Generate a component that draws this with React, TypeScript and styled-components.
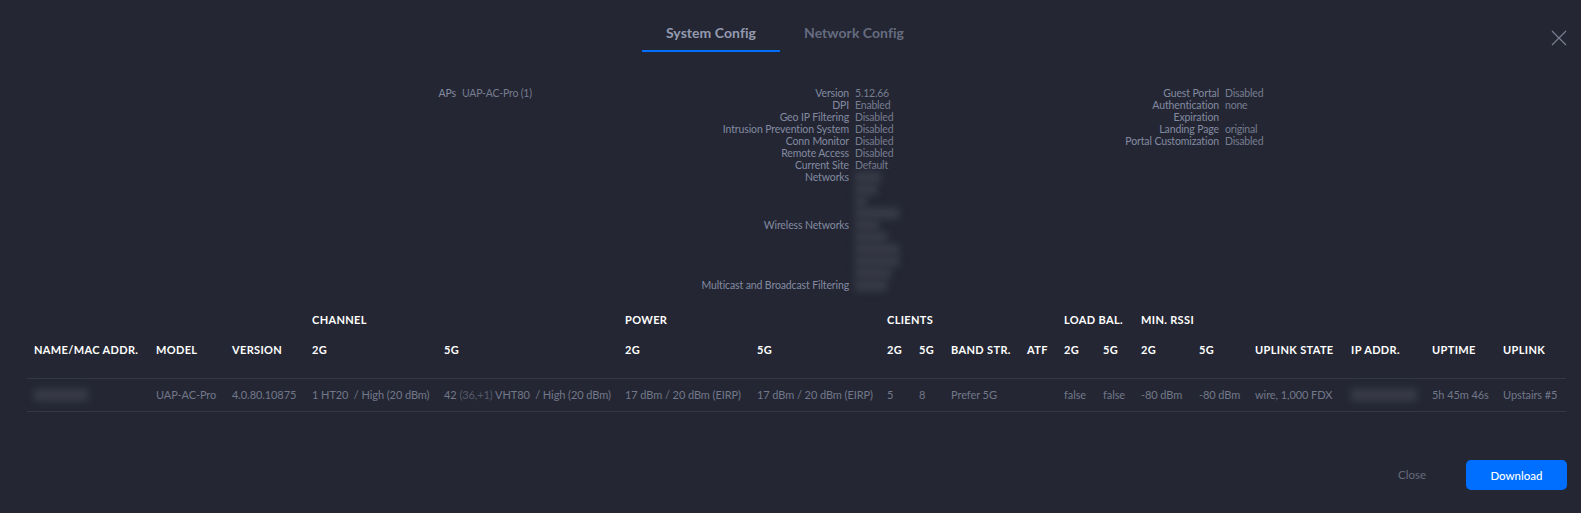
import React from "react";
import styled, { createGlobalStyle } from "styled-components";

const Global = createGlobalStyle`
  html, body { margin: 0; padding: 0; background: #242733; }
  body { font-family: Lato, "Open Sans", sans-serif; overflow: hidden; }
`;

const Page = styled.div`
  width: 1581px;
  height: 513px;
  position: relative;
  background: #242733;
  overflow: hidden;
  display: flex;
  flex-direction: column;
`;

const Tabs = styled.div`
  display: flex;
  justify-content: flex-start;
  padding-left: 642px;
  height: 52px;
`;

const Tab = styled.div<{ $active?: boolean }>`
  box-sizing: border-box;
  height: 52px;
  padding: 0 24px 9px;
  display: flex;
  align-items: flex-end;
  font-size: 14px;
  line-height: 17px;
  font-weight: 700;
  letter-spacing: 0.05px;
  color: ${(p) => (p.$active ? "#939ab0" : "#666c80")};
  border-bottom: 2px solid ${(p) => (p.$active ? "#006fff" : "transparent")};
`;

const CloseButton = styled.button`
  position: absolute;
  top: 30px;
  right: 14px;
  width: 16px;
  height: 16px;
  padding: 0;
  border: 0;
  background: none;
  display: block;
  color: #7d8294;
`;

const Summary = styled.div`
  display: flex;
  margin-top: 35px;
  height: 218px;
`;

const SummaryColumn = styled.div<{ $width: number; $label: number }>`
  width: ${(p) => p.$width}px;
  display: grid;
  grid-template-columns: ${(p) => p.$label}px 1fr;
  grid-auto-rows: 12px;
  column-gap: 6px;
  align-content: start;
  font-size: 10.5px;
  line-height: 12px;
`;

const Label = styled.div<{ $span?: number }>`
  text-align: right;
  color: #838aa1;
  white-space: nowrap;
  letter-spacing: -0.12px;
  grid-row: span ${(p) => p.$span ?? 1};
`;

const Value = styled.div`
  color: #767c90;
  white-space: nowrap;
  letter-spacing: -0.2px;
`;

const BlurStack = styled.div<{ $span: number }>`
  grid-row: span ${(p) => p.$span};
  display: grid;
  grid-auto-rows: 12px;
  align-items: center;
`;

const BlurBar = styled.span<{ $width: number; $height?: number }>`
  display: block;
  width: ${(p) => p.$width}px;
  height: ${(p) => p.$height ?? 11}px;
  background: #383a48;
  filter: blur(3.5px);
`;

const TableBox = styled.div`
  padding: 0 15px 0 27px;
`;

const Table = styled.table`
  width: 1539px;
  table-layout: fixed;
  border-collapse: collapse;
  font-size: 11px;
`;

const Col = styled.col<{ $w: number }>`
  width: ${(p) => p.$w}px;
`;

const Head = styled.th<{ $tall?: boolean }>`
  padding: ${(p) => (p.$tall ? "8px 7px 21px" : "7px 7px")};
  height: ${(p) => (p.$tall ? "14px" : "16px")};
  text-align: left;
  color: #fff;
  font-size: 11px;
  font-weight: 700;
  letter-spacing: 0.35px;
  line-height: 14px;
  white-space: nowrap;
  overflow: visible;
  box-sizing: content-box;
`;

const Cell = styled.td`
  padding: 0 7px 1px;
  height: 31px;
  color: #72778a;
  letter-spacing: -0.08px;
  white-space: nowrap;
  overflow: visible;
  border-top: 1px solid #343745;
  border-bottom: 1px solid #343745;
`;

const Dim = styled.span`
  color: #545869;
`;

const Footer = styled.div`
  margin-top: auto;
  padding: 0 14px 23px 0;
  display: flex;
  justify-content: flex-end;
  align-items: center;
`;

const CloseLink = styled.button`
  border: 0;
  background: none;
  padding: 0 0 2px;
  margin-right: 40px;
  font: 400 11.5px Lato, sans-serif;
  color: #666b7c;
`;

const Primary = styled.button`
  width: 101px;
  height: 30px;
  border: 0;
  border-radius: 5px;
  background: #006fff;
  color: #fff;
  font: 500 11.5px Lato, sans-serif;
`;

const widths = [122, 76, 80, 132, 181, 132, 130, 32, 32, 76, 37, 39, 38, 58, 56, 96, 81, 71, 70];

const system: [string, string][] = [
  ["Version", "5.12.66"],
  ["DPI", "Enabled"],
  ["Geo IP Filtering", "Disabled"],
  ["Intrusion Prevention System", "Disabled"],
  ["Conn Monitor", "Disabled"],
  ["Remote Access", "Disabled"],
  ["Current Site", "Default"],
];

const portal: [string, string][] = [
  ["Guest Portal", "Disabled"],
  ["Authentication", "none"],
  ["Expiration", ""],
  ["Landing Page", "original"],
  ["Portal Customization", "Disabled"],
];

const subHeads = [
  "NAME/MAC ADDR.", "MODEL", "VERSION", "2G", "5G", "2G", "5G", "2G", "5G", "BAND STR.", "ATF",
  "2G", "5G", "2G", "5G", "UPLINK STATE", "IP ADDR.", "UPTIME", "UPLINK",
];

export default function App() {
  return (
    <Page>
      <Global />
      <Tabs>
        <Tab $active>System Config</Tab>
        <Tab>Network Config</Tab>
      </Tabs>
      <CloseButton aria-label="Close dialog">
        <svg width="16" height="16" viewBox="0 0 16 16" fill="none" stroke="currentColor" strokeWidth="1.1">
          <path d="M1 1 L15 15 M15 1 L1 15" />
        </svg>
      </CloseButton>

      <Summary>
        <SummaryColumn $width={530} $label={456}>
          <Label>APs</Label>
          <Value>UAP-AC-Pro (1)</Value>
        </SummaryColumn>
        <SummaryColumn $width={400} $label={319}>
          {system.map(([k, v]) => (
            <React.Fragment key={k}>
              <Label>{k}</Label>
              <Value>{v}</Value>
            </React.Fragment>
          ))}
          <Label $span={4}>Networks</Label>
          <BlurStack $span={4}>
            <BlurBar $width={26} />
            <BlurBar $width={22} />
            <BlurBar $width={12} />
            <BlurBar $width={44} />
          </BlurStack>
          <Label $span={5}>Wireless Networks</Label>
          <BlurStack $span={5}>
            <BlurBar $width={24} />
            <BlurBar $width={32} />
            <BlurBar $width={44} />
            <BlurBar $width={44} />
            <BlurBar $width={36} />
          </BlurStack>
          <Label>Multicast and Broadcast Filtering</Label>
          <BlurStack $span={1}>
            <BlurBar $width={32} />
          </BlurStack>
        </SummaryColumn>
        <SummaryColumn $width={400} $label={289}>
          {portal.map(([k, v]) => (
            <React.Fragment key={k}>
              <Label>{k}</Label>
              <Value>{v}</Value>
            </React.Fragment>
          ))}
        </SummaryColumn>
      </Summary>

      <TableBox>
        <Table>
          <colgroup>
            {widths.map((w, i) => (
              <Col key={i} $w={w} />
            ))}
          </colgroup>
          <thead>
            <tr>
              <Head colSpan={3} />
              <Head colSpan={2}>CHANNEL</Head>
              <Head colSpan={2}>POWER</Head>
              <Head colSpan={4}>CLIENTS</Head>
              <Head colSpan={2}>LOAD BAL.</Head>
              <Head colSpan={2}>MIN. RSSI</Head>
              <Head colSpan={4} />
            </tr>
            <tr>
              {subHeads.map((h, i) => (
                <Head key={i} $tall>{h}</Head>
              ))}
            </tr>
          </thead>
          <tbody>
            <tr>
              <Cell><BlurBar $width={54} $height={12} /></Cell>
              <Cell>UAP-AC-Pro</Cell>
              <Cell>4.0.80.10875</Cell>
              <Cell>1 HT20 &nbsp;/ High (20 dBm)</Cell>
              <Cell>42 <Dim>(36,+1)</Dim> VHT80 &nbsp;/ High (20 dBm)</Cell>
              <Cell>17 dBm / 20 dBm (EIRP)</Cell>
              <Cell>17 dBm / 20 dBm (EIRP)</Cell>
              <Cell>5</Cell>
              <Cell>8</Cell>
              <Cell>Prefer 5G</Cell>
              <Cell />
              <Cell>false</Cell>
              <Cell>false</Cell>
              <Cell>-80 dBm</Cell>
              <Cell>-80 dBm</Cell>
              <Cell>wire, 1,000 FDX</Cell>
              <Cell><BlurBar $width={66} $height={12} /></Cell>
              <Cell>5h 45m 46s</Cell>
              <Cell>Upstairs #5</Cell>
            </tr>
          </tbody>
        </Table>
      </TableBox>

      <Footer>
        <CloseLink>Close</CloseLink>
        <Primary>Download</Primary>
      </Footer>
    </Page>
  );
}
